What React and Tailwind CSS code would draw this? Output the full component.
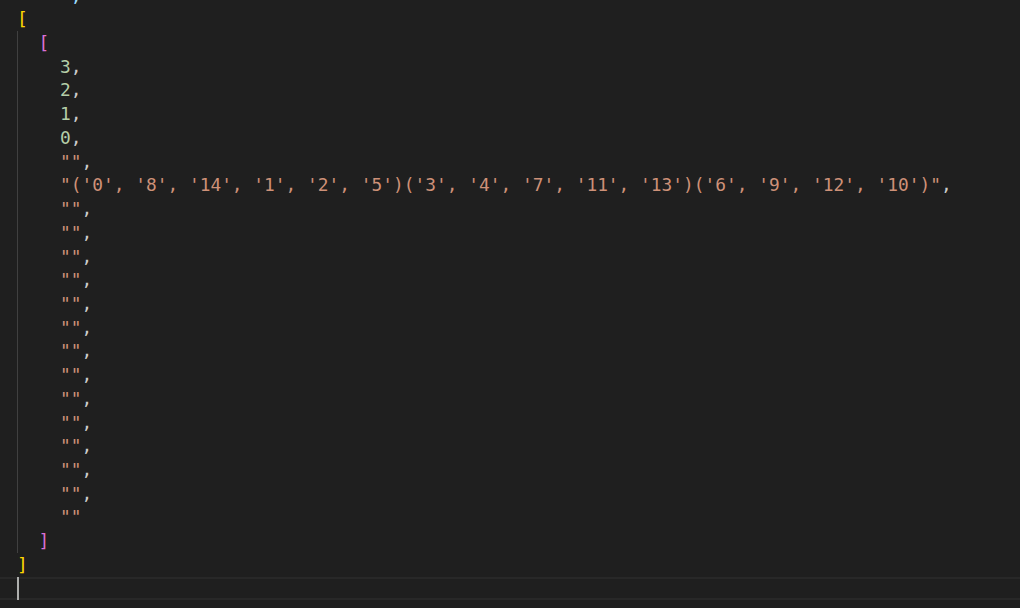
const C = {
  gold: "text-[#ffd700]",
  orchid: "text-[#da70d6]",
  num: "text-[#b5cea8]",
  str: "text-[#ce9178]",
  punct: "text-[#cccccc]",
};

const tuple =
  "\"('0', '8', '14', '1', '2', '5')('3', '4', '7', '11', '13')('6', '9', '12', '10')\"";

function Line({ children }) {
  return <div className="h-[23.73px] whitespace-pre">{children}</div>;
}

export default function App() {
  const emptyStrings = Array.from({ length: 13 });

  return (
    <div className="w-[1020px] h-[608px] overflow-hidden bg-[#1f1f1f] font-['DejaVu_Sans_Mono',monospace] text-[17.85px] leading-[23.73px]">
      <div className="mt-[-16.4px]">
        <div className="pl-[17px]">
          <Line>
            {"     "}
            <span className="text-[#9cdcfe]">,</span>
          </Line>
          <Line>
            <span className={C.gold}>[</span>
          </Line>
          <div className="shadow-[inset_1px_0_0_#404040]">
            <Line>
              {"  "}
              <span className={C.orchid}>[</span>
            </Line>
            {["3", "2", "1", "0"].map((n) => (
              <Line key={n}>
                {"    "}
                <span className={C.num}>{n}</span>
                <span className={C.punct}>,</span>
              </Line>
            ))}
            <Line>
              {"    "}
              <span className={C.str}>""</span>
              <span className={C.punct}>,</span>
            </Line>
            <Line>
              {"    "}
              <span className={C.str}>{tuple}</span>
              <span className={C.punct}>,</span>
            </Line>
            {emptyStrings.map((_, i) => (
              <Line key={i}>
                {"    "}
                <span className={C.str}>""</span>
                <span className={C.punct}>,</span>
              </Line>
            ))}
            <Line>
              {"    "}
              <span className={C.str}>""</span>
            </Line>
            <Line>
              {"  "}
              <span className={C.orchid}>]</span>
            </Line>
          </div>
          <Line>
            <span className={C.gold}>]</span>
          </Line>
        </div>
        <div className="h-[23.73px] border-y-2 border-[#282828] pl-[17px] flex items-stretch">
          <div className="w-[2px] bg-[#aeafad] -my-[2px]" />
        </div>
      </div>
    </div>
  );
}
